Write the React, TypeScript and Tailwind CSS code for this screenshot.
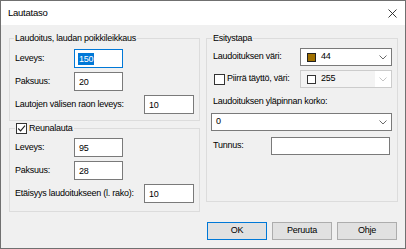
import React from "react";

const FONT = { fontFamily: '"Liberation Sans", Arial, sans-serif' };

function Chevron({ disabled }: { disabled?: boolean }) {
  return (
    <svg width="8" height="5" viewBox="0 0 8 5" className="shrink-0">
      <path
        d="M0.5 0.5 L4 4 L7.5 0.5"
        fill="none"
        stroke={disabled ? "#c4c4c4" : "#6a6a6a"}
        strokeWidth="1"
      />
    </svg>
  );
}

function CheckBox({ checked }: { checked?: boolean }) {
  return (
    <div className="w-[11px] h-[11px] border border-[#333333] bg-white flex items-center justify-center shrink-0">
      {checked && (
        <svg width="9" height="9" viewBox="0 0 9 9">
          <path d="M1.2 4.5 L3.6 6.9 L8 1.6" fill="none" stroke="#222" strokeWidth="1.1" />
        </svg>
      )}
    </div>
  );
}

function TextBox({
  value,
  w,
  selected,
  focused,
}: {
  value: string;
  w: string;
  selected?: boolean;
  focused?: boolean;
}) {
  return (
    <div
      className={`${w} h-[19px] shrink-0 border ${
        focused ? "border-[#0078d7]" : "border-[#7a7a7a]"
      } bg-white flex items-center pl-[3px]`}
    >
      {selected ? (
        <span className="bg-[#0078d7] text-white px-[1px] leading-[12px]">{value}</span>
      ) : (
        <span className="px-[1px] leading-[12px]">{value}</span>
      )}
    </div>
  );
}

function Row({ label, lw, children }: { label: string; lw: string; children: React.ReactNode }) {
  return (
    <div className="flex items-center h-[19px]">
      <div className={`${lw} shrink-0 whitespace-nowrap`}>{label}</div>
      {children}
    </div>
  );
}

function Button({ label, def }: { label: string; def?: boolean }) {
  return (
    <div
      className={`w-[60px] h-[18px] flex items-center justify-center bg-[#e1e1e1] border ${
        def ? "border-[#0078d7]" : "border-[#adadad]"
      }`}
    >
      {label}
    </div>
  );
}

export default function App() {
  return (
    <div
      className="w-[406px] h-[249px] border border-[#707070] bg-[#f0f0f0] flex flex-col text-[9px] tracking-[-0.25px] text-black overflow-hidden"
      style={FONT}
    >
      {/* title bar */}
      <div className="h-[24px] bg-white flex items-center justify-between pl-[7px] pr-[8px] shrink-0">
        <span className="text-[9.5px]">Lautataso</span>
        <svg width="9" height="9" viewBox="0 0 9 9">
          <path d="M0.5 0.5 L8.5 8.5 M8.5 0.5 L0.5 8.5" stroke="#222" strokeWidth="0.9" />
        </svg>
      </div>

      {/* body */}
      <div className="flex flex-col pl-[8px] pr-[7px] pt-[13px]">
        <div className="flex gap-[6px] items-start">
          {/* left column */}
          <div className="w-[191px] flex flex-col">
            <div className="relative h-[83px] border border-[#dcdcdc] pt-[10px] pl-[5px] flex flex-col gap-[4px]">
              <span className="absolute -top-[7px] left-[4px] px-[1px] bg-[#f0f0f0] leading-[12px] whitespace-nowrap">
                Laudoitus, laudan poikkileikkaus
              </span>
              <Row label="Leveys:" lw="w-[59px]">
                <TextBox value="150" w="w-[49px]" selected focused />
              </Row>
              <Row label="Paksuus:" lw="w-[59px]">
                <TextBox value="20" w="w-[49px]" />
              </Row>
              <Row label="Lautojen välisen raon leveys:" lw="w-[129px]">
                <TextBox value="10" w="w-[50px]" />
              </Row>
            </div>

            <div className="relative mt-[7px] h-[84px] border border-[#dcdcdc] pt-[9px] pl-[5px] flex flex-col gap-[4px]">
              <span className="absolute -top-[7px] left-[5px] px-[1px] bg-[#f0f0f0] leading-[12px] flex items-center gap-[2px] whitespace-nowrap">
                <CheckBox checked />
                <span>Reunalauta</span>
              </span>
              <Row label="Leveys:" lw="w-[59px]">
                <TextBox value="95" w="w-[49px]" />
              </Row>
              <Row label="Paksuus:" lw="w-[59px]">
                <TextBox value="28" w="w-[49px]" />
              </Row>
              <Row label="Etäisyys laudoitukseen (l. rako):" lw="w-[129px]">
                <TextBox value="10" w="w-[50px]" />
              </Row>
            </div>
          </div>

          {/* right column */}
          <div className="relative w-[192px] h-[164px] border border-[#dcdcdc] pt-[9px] pl-[4px] flex flex-col">
            <span className="absolute -top-[7px] left-[5px] px-[1px] bg-[#f0f0f0] leading-[12px] whitespace-nowrap">
              Esitystapa
            </span>

            <div className="flex items-center h-[18px]">
              <div className="w-[89px] pl-[2px] shrink-0 whitespace-nowrap">Laudoituksen väri:</div>
              <div className="w-[92px] h-[18px] border border-[#7a7a7a] bg-white flex items-center pl-[6px] pr-[4px]">
                <div className="w-[9px] h-[9px] border border-[#222] bg-[#a07000] shrink-0" />
                <span className="ml-[5px] flex-1">44</span>
                <Chevron />
              </div>
            </div>

            <div className="flex items-center h-[18px] mt-[4px]">
              <div className="w-[89px] pl-[3px] shrink-0 flex items-center gap-[2px] whitespace-nowrap">
                <CheckBox />
                <span>Piirrä täyttö, väri:</span>
              </div>
              <div className="w-[92px] h-[18px] border border-[#cccccc] bg-[#f3f3f3] flex items-center pl-[6px]">
                <div className="w-[9px] h-[9px] border border-[#333] bg-white shrink-0" />
                <span className="ml-[5px] flex-1">255</span>
                <div className="w-[16px] h-full bg-white flex items-center justify-center">
                  <Chevron disabled />
                </div>
              </div>
            </div>

            <div className="h-[12px] mt-[8px] pl-[2px] flex items-center whitespace-nowrap">
              Laudoituksen yläpinnan korko:
            </div>

            <div className="mt-[5px] w-[181px] h-[18px] border border-[#7a7a7a] bg-white flex items-center pl-[4px] pr-[4px]">
              <span className="flex-1">0</span>
              <Chevron />
            </div>

            <div className="flex items-center h-[18px] mt-[6px]">
              <div className="w-[60px] pl-[2px] shrink-0">Tunnus:</div>
              <div className="w-[119px] h-[18px] border border-[#7a7a7a] bg-white" />
            </div>
          </div>
        </div>

        {/* buttons */}
        <div className="flex justify-end gap-[5px] mt-[10px] pr-[1px]">
          <Button label="OK" def />
          <Button label="Peruuta" />
          <Button label="Ohje" />
        </div>
      </div>
    </div>
  );
}
